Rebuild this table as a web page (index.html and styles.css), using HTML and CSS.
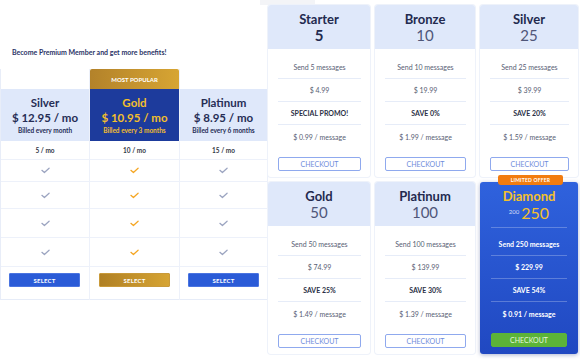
FILE: index.html
```html
<!DOCTYPE html>
<html>
<head>
<meta charset="utf-8">
<link rel="stylesheet" href="styles.css">
</head>
<body>
<div class="page">
  <section class="plans">
    <p class="intro">Become Premium Member and get more benefits!</p>
    <div class="table">
      <div class="col col-silver">
        <div class="badge"></div>
        <div class="head">
          <div class="name">Silver</div>
          <div class="price">$ 12.95 / mo</div>
          <div class="billed">Billed every month</div>
        </div>
        <div class="cell qty">5 / mo</div>
        <div class="cell r1"><svg class="check" viewBox="0 0 10 7"><path d="M1 3.3 L3.8 5.8 L9 1"/></svg></div>
        <div class="cell r2"><svg class="check" viewBox="0 0 10 7"><path d="M1 3.3 L3.8 5.8 L9 1"/></svg></div>
        <div class="cell r3"><svg class="check" viewBox="0 0 10 7"><path d="M1 3.3 L3.8 5.8 L9 1"/></svg></div>
        <div class="cell r4"><svg class="check" viewBox="0 0 10 7"><path d="M1 3.3 L3.8 5.8 L9 1"/></svg></div>
        <div class="cell btn-row"><div class="select">SELECT</div></div>
      </div>
      <div class="col col-gold">
        <div class="badge">MOST POPULAR</div>
        <div class="head">
          <div class="name">Gold</div>
          <div class="price">$ 10.95 / mo</div>
          <div class="billed">Billed every 3 months</div>
        </div>
        <div class="cell qty">10 / mo</div>
        <div class="cell r1"><svg class="check" viewBox="0 0 10 7"><path d="M1 3.3 L3.8 5.8 L9 1"/></svg></div>
        <div class="cell r2"><svg class="check" viewBox="0 0 10 7"><path d="M1 3.3 L3.8 5.8 L9 1"/></svg></div>
        <div class="cell r3"><svg class="check" viewBox="0 0 10 7"><path d="M1 3.3 L3.8 5.8 L9 1"/></svg></div>
        <div class="cell r4"><svg class="check" viewBox="0 0 10 7"><path d="M1 3.3 L3.8 5.8 L9 1"/></svg></div>
        <div class="cell btn-row"><div class="select">SELECT</div></div>
      </div>
      <div class="col col-platinum">
        <div class="badge"></div>
        <div class="head">
          <div class="name">Platinum</div>
          <div class="price">$ 8.95 / mo</div>
          <div class="billed">Billed every 6 months</div>
        </div>
        <div class="cell qty">15 / mo</div>
        <div class="cell r1"><svg class="check" viewBox="0 0 10 7"><path d="M1 3.3 L3.8 5.8 L9 1"/></svg></div>
        <div class="cell r2"><svg class="check" viewBox="0 0 10 7"><path d="M1 3.3 L3.8 5.8 L9 1"/></svg></div>
        <div class="cell r3"><svg class="check" viewBox="0 0 10 7"><path d="M1 3.3 L3.8 5.8 L9 1"/></svg></div>
        <div class="cell r4"><svg class="check" viewBox="0 0 10 7"><path d="M1 3.3 L3.8 5.8 L9 1"/></svg></div>
        <div class="cell btn-row"><div class="select">SELECT</div></div>
      </div>
    </div>
  </section>

  <section class="packs">
    <div class="tab"></div>
    <div class="grid">
      <div class="card">
        <div class="card-head">
          <div class="card-title">Starter</div>
          <div class="card-num strong">5</div>
        </div>
        <div class="card-body">
          <div class="row">Send 5 messages</div>
          <div class="row">$ 4.99</div>
          <div class="row promo">SPECIAL PROMO!</div>
          <div class="row last">$ 0.99 / message</div>
          <div class="checkout">CHECKOUT</div>
        </div>
      </div>
      <div class="card">
        <div class="card-head">
          <div class="card-title">Bronze</div>
          <div class="card-num">10</div>
        </div>
        <div class="card-body">
          <div class="row">Send 10 messages</div>
          <div class="row">$ 19.99</div>
          <div class="row promo">SAVE 0%</div>
          <div class="row last">$ 1.99 / message</div>
          <div class="checkout">CHECKOUT</div>
        </div>
      </div>
      <div class="card">
        <div class="card-head">
          <div class="card-title">Silver</div>
          <div class="card-num">25</div>
        </div>
        <div class="card-body">
          <div class="row">Send 25 messages</div>
          <div class="row">$ 39.99</div>
          <div class="row promo">SAVE 20%</div>
          <div class="row last">$ 1.59 / message</div>
          <div class="checkout">CHECKOUT</div>
        </div>
      </div>
      <div class="card">
        <div class="card-head">
          <div class="card-title">Gold</div>
          <div class="card-num">50</div>
        </div>
        <div class="card-body">
          <div class="row">Send 50 messages</div>
          <div class="row">$ 74.99</div>
          <div class="row promo">SAVE 25%</div>
          <div class="row last">$ 1.49 / message</div>
          <div class="checkout">CHECKOUT</div>
        </div>
      </div>
      <div class="card">
        <div class="card-head">
          <div class="card-title">Platinum</div>
          <div class="card-num">100</div>
        </div>
        <div class="card-body">
          <div class="row">Send 100 messages</div>
          <div class="row">$ 139.99</div>
          <div class="row promo">SAVE 30%</div>
          <div class="row last">$ 1.39 / message</div>
          <div class="checkout">CHECKOUT</div>
        </div>
      </div>
      <div class="card diamond">
        <div class="offer">LIMITED OFFER</div>
        <div class="card-head">
          <div class="card-title">Diamond</div>
          <div class="card-num"><span class="old">200</span>250</div>
        </div>
        <div class="card-body">
          <div class="row">Send 250 messages</div>
          <div class="row">$ 229.99</div>
          <div class="row promo">SAVE 54%</div>
          <div class="row last">$ 0.91 / message</div>
          <div class="checkout">CHECKOUT</div>
        </div>
      </div>
    </div>
  </section>
</div>
</body>
</html>
```

FILE: styles.css
```css
* { box-sizing: border-box; }
body {
  margin: 0;
  width: 580px;
  height: 363px;
  overflow: hidden;
  background: #fff;
  font-family: Lato, "Noto Sans", sans-serif;
  color: #262d55;
}
.page { display: flex; }

/* left plans table */
.plans { width: 268px; flex: none; padding-top: 47px; }
.intro {
  margin: 0 0 12px 12px;
  font-size: 7px;
  line-height: 10px;
  font-weight: 700;
  color: #2b3366;
}
.table { display: flex; }
.col { display: flex; flex-direction: column; width: 90px; border-right: 1px solid #edf1fa; }
.col-silver { border-left: 1px solid #e8edf8; }
.col-platinum { width: 88px; }
.badge { height: 20px; }
.col-gold .badge {
  background: linear-gradient(90deg, #b3822a, #d7a533);
  border-radius: 2px 2px 0 0;
  color: #fff;
  font-size: 6px;
  font-weight: 700;
  display: flex;
  align-items: center;
  justify-content: center;
}
.head {
  height: 52px;
  background: #dfe8fa;
  padding-top: 6px;
  text-align: center;
}
.col-gold .head { background: #1d3b9c; color: #f3bf2c; }
.name { font-size: 11.5px; line-height: 15px; font-weight: 700; }
.price { font-size: 11.5px; line-height: 15px; font-weight: 700; }
.billed { font-size: 6.5px; line-height: 10px; font-weight: 700; margin-top: 1px; }
.cell {
  display: flex;
  align-items: center;
  justify-content: center;
  border-bottom: 1px solid #edf1fa;
}
.qty { height: 19px; font-size: 6.5px; font-weight: 700; color: #333845; }
.r1 { height: 22px; }
.r2 { height: 27px; }
.r3 { height: 29px; }
.r4 { height: 29px; }
.btn-row { height: 33px; align-items: flex-start; padding: 6px 9px 0; border-bottom-color: #e6ecf8; }
.col-silver .btn-row { padding-left: 8px; }
.col-platinum .btn-row { padding: 6px 8px 0; }
.check { width: 9px; height: 7px; fill: none; stroke: #9ba4c0; stroke-width: 1.4; stroke-linecap: round; stroke-linejoin: round; }
.col-gold .check { stroke: #f5a623; }
.select {
  width: 100%;
  height: 14px;
  background: #2a5bd7;
  border: 1px solid #4a74e0;
  border-radius: 1px;
  color: #fff;
  font-size: 6px;
  font-weight: 700;
  letter-spacing: 0.2px;
  display: flex;
  align-items: center;
  justify-content: center;
}
.col-gold .select { background: linear-gradient(90deg, #b08024, #d6a433); border-color: #c99a3a; }

/* right packs */
.packs { width: 312px; flex: none; }
.tab { width: 55px; height: 5px; margin-left: -8px; background: #f3f4f7; }
.grid {
  display: grid;
  grid-template-columns: 102px 100px 98px;
  grid-template-rows: 172px 172px;
  gap: 5px;
}
.card {
  position: relative;
  background: #fff;
  border-radius: 3px;
  box-shadow: 0 0 0 1px #eef2fa;
}
.card-head {
  height: 44px;
  background: #dfe8fa;
  border-radius: 3px 3px 0 0;
  padding-top: 6px;
  text-align: center;
}
.card-title { font-size: 13px; line-height: 16px; font-weight: 700; color: #232a4f; }
.card-num { font-size: 15px; line-height: 16px; color: #4f5679; }
.card-num.strong { font-weight: 700; color: #232a4f; }
.card-body { padding: 7px 9px 0 10px; }
.row {
  height: 23px;
  border-bottom: 1px solid #e6ecf8;
  display: flex;
  align-items: center;
  justify-content: center;
  font-size: 7px;
  color: #585e74;
}
.row.last { border-bottom: none; }
.row.promo { font-weight: 700; color: #2b3046; }
.checkout {
  margin-top: 9px;
  height: 14px;
  border: 1px solid #8fa9ee;
  border-radius: 2px;
  color: #6f8cdb;
  font-size: 7px;
  display: flex;
  align-items: center;
  justify-content: center;
}

/* diamond */
.diamond {
  background: linear-gradient(180deg, #2f62dd, #2048c1);
  box-shadow: 0 1px 4px rgba(20, 40, 120, 0.35);
}
.diamond .card-head {
  background: none;
  margin: 0 11px;
  height: 46px;
  border-bottom: 1px solid rgba(255, 255, 255, 0.25);
}
.diamond .card-title { color: #f4c12b; }
.diamond .card-num { color: #f4c12b; font-size: 16px; }
.old { font-size: 6px; color: #d5ddf6; vertical-align: 5px; margin-right: 2px; }
.diamond .card-body { padding: 5px 11px 0; }
.diamond .row { color: #fff; font-weight: 700; border-bottom-color: rgba(255, 255, 255, 0.25); }
.diamond .checkout { background: #5cb338; border-color: #5cb338; color: #e8f6de; margin-top: 8px; }
.offer {
  position: absolute;
  top: -7px;
  left: 18px;
  width: 65px;
  height: 10px;
  background: #f27c10;
  border-radius: 2px 2px 3px 3px;
  color: #fff;
  font-size: 5px;
  font-weight: 700;
  display: flex;
  align-items: center;
  justify-content: center;
  letter-spacing: 0.2px;
}
```
